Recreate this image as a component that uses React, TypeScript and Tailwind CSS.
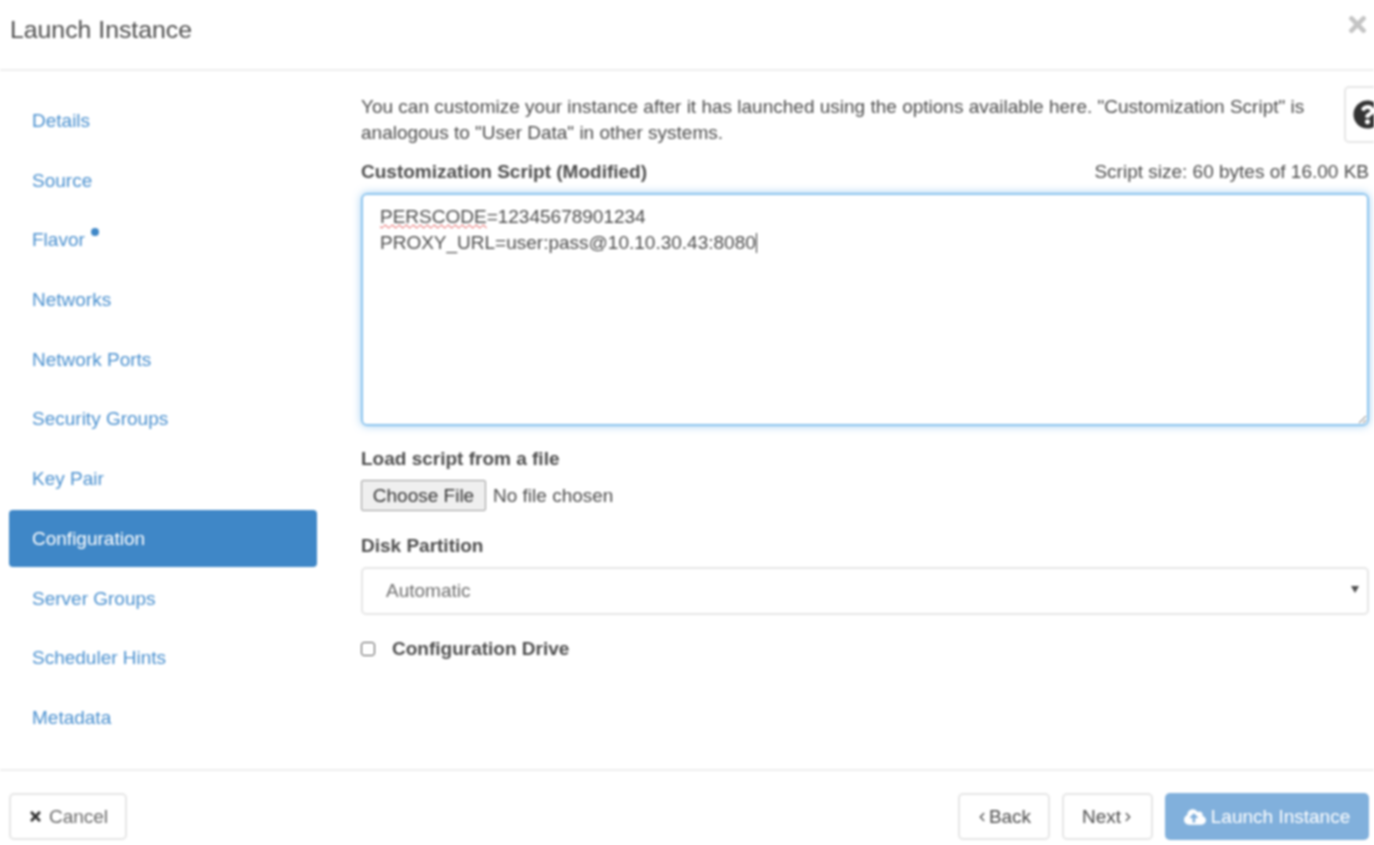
import React from "react";
import { FaTimes, FaQuestionCircle, FaCloudUploadAlt } from "react-icons/fa";
import { ChevronLeft, ChevronRight } from "lucide-react";

const steps = ["Details", "Source", "Flavor", "Networks", "Network Ports", "Security Groups", "Key Pair", "Configuration", "Server Groups", "Scheduler Hints", "Metadata"];

function NavItem({ label }: { label: string }) {
  const active = label === "Configuration";
  return (
    <a className={`flex h-[57px] items-center rounded-[4px] pl-[23px] ${active ? "bg-[#3f87c7] text-white" : "text-[#4a90cf]"}`}>
      <span>{label}</span>
      {label === "Flavor" && <span className="mb-[17px] ml-[6px] h-[8px] w-[8px] rounded-full bg-[#3f87c7]" />}
    </a>
  );
}

export default function App() {
  return (
    <div className="flex h-[845px] w-[1374px] flex-col overflow-hidden bg-white font-['Liberation_Sans',Arial,sans-serif] text-[19px] leading-[26px] text-[#4d4d4d] blur-[0.8px]">
      <header className="flex h-[71px] shrink-0 items-start justify-between border-b-2 border-[#eeeeee] pl-[10px] pr-[4px]">
        <h4 className="mt-[16px] text-[24.8px] leading-[28px] text-[#4d4d4d]">Launch Instance</h4>
        <FaTimes className="mt-[12px] text-[25px] text-[#c4c4c4]" />
      </header>

      <main className="flex h-[698px] shrink-0">
        <nav className="flex w-[361px] shrink-0 flex-col gap-[2.7px] pl-[9px] pr-[44px] pt-[21.5px]">
          {steps.map((s) => (
            <NavItem key={s} label={s} />
          ))}
        </nav>

        <section className="min-w-0 flex-1 pr-[5px] pt-[15px]">
          <div className="relative h-[75px]">
            <p className="w-[960px] pt-[8px]">
              You can customize your instance after it has launched using the options available here. "Customization Script" is analogous to "User Data" in other systems.
            </p>
            <button className="absolute left-[983px] top-0 flex h-[57px] w-[60px] items-center rounded-[5px] border-2 border-[#e6e6e6] bg-white pl-[7px]">
              <FaQuestionCircle className="text-[29px] text-[#333333]" />
            </button>
          </div>

          <div className="mt-[-2px] flex items-center justify-between">
            <label className="font-bold">Customization Script (Modified)</label>
            <span>Script size: 60 bytes of 16.00 KB</span>
          </div>

          <div className="mt-[8px] h-[233px] resize overflow-auto rounded-[6px] border-2 border-[#8cc4ee] px-[17px] pb-[8px] pt-[9px] shadow-[0_0_8px_rgba(102,175,233,0.6)]">
            <div>
              <span className="underline decoration-[#e04040] decoration-wavy decoration-1 underline-offset-1">PERSCODE</span>=12345678901234
            </div>
            <div className="flex items-center">
              PROXY_URL=user:pass@10.10.30.43:8080
              <span className="h-[20px] w-px bg-[#333333]" />
            </div>
          </div>

          <label className="mt-[20px] block font-bold">Load script from a file</label>
          <input
            type="file"
            className="mt-[8px] block h-[31px] w-[400px] text-[19px] text-[#4d4d4d] file:mr-[7px] file:h-[31px] file:w-[125px] file:rounded-[2px] file:border file:border-solid file:border-[#9a9a9a] file:bg-[#efefef] file:text-[19px] file:text-[#333333]"
          />

          <label className="mt-[22px] block font-bold">Disk Partition</label>
          <div className="relative mt-[8px]">
            <select className="h-[48px] w-full appearance-none rounded-[5px] border-2 border-[#e6e6e6] bg-white pl-[23px] text-[#6e6e6e]">
              <option>Automatic</option>
            </select>
            <span className="absolute right-[10px] top-[19px] h-0 w-0 border-x-[4px] border-t-[7px] border-x-transparent border-t-[#4d4d4d]" />
          </div>

          <div className="mt-[21px] flex items-center gap-[17px]">
            <input type="checkbox" className="h-[14px] w-[14px] appearance-none rounded-[3px] border-[1.5px] border-[#555555] bg-white" />
            <label className="font-bold">Configuration Drive</label>
          </div>
        </section>
      </main>

      <footer className="flex flex-1 items-start justify-between border-t-2 border-[#eeeeee] px-[5px] pl-[9px] pt-[22px]">
        <button className="flex h-[47px] w-[118px] items-center justify-center gap-[6px] rounded-[5px] border-2 border-[#e6e6e6] bg-white text-[#6a6a6a]">
          <FaTimes className="text-[15px] text-[#333333]" />
          Cancel
        </button>
        <div className="flex gap-[12px]">
          <button className="flex h-[47px] w-[92px] items-center justify-center rounded-[5px] border-2 border-[#e6e6e6] bg-white pr-[2px]">
            <ChevronLeft size={14} strokeWidth={2.25} />
            Back
          </button>
          <button className="flex h-[47px] w-[91px] items-center justify-center rounded-[5px] border-2 border-[#e6e6e6] bg-white pl-[2px]">
            Next
            <ChevronRight size={14} strokeWidth={2.25} />
          </button>
          <button className="flex h-[47px] w-[204px] items-center justify-center gap-[5px] rounded-[5px] bg-[#81b0dc] text-white">
            <FaCloudUploadAlt className="text-[22px]" />
            Launch Instance
          </button>
        </div>
      </footer>
    </div>
  );
}
